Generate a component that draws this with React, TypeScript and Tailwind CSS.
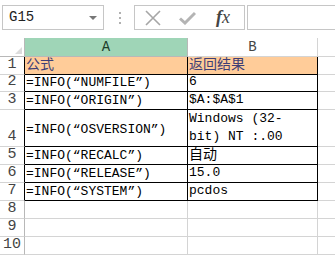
const cellFont = { fontFamily: '"Liberation Mono", "Noto Sans CJK SC", monospace' }

type Row = { n: number; h: string; a?: string; b?: string[]; head?: boolean; mid?: boolean; cjk?: boolean }

const rows: Row[] = [
  { n: 1, h: 'h-[18px]', a: '公式', b: ['返回结果'], head: true },
  { n: 2, h: 'h-[17px]', a: '=INFO(“NUMFILE”)', b: ['6'] },
  { n: 3, h: 'h-[18px]', a: '=INFO(“ORIGIN”)', b: ['$A:$A$1'] },
  { n: 4, h: 'h-[37px]', a: '=INFO(“OSVERSION”)', b: ['Windows (32-', 'bit) NT :.00'], mid: true },
  { n: 5, h: 'h-[18px]', a: '=INFO(“RECALC”)', b: ['自动'], cjk: true },
  { n: 6, h: 'h-[18px]', a: '=INFO(“RELEASE”)', b: ['15.0'] },
  { n: 7, h: 'h-[18px]', a: '=INFO(“SYSTEM”)', b: ['pcdos'] },
  { n: 8, h: 'h-[18px]' },
  { n: 9, h: 'h-[18px]' },
  { n: 10, h: 'h-[18px]' },
]

function FormulaBar() {
  return (
    <div className="flex h-[38px] items-start bg-white pt-[5px]">
      <div className="ml-[2px] flex h-[25px] w-[102px] items-center justify-between border border-[#c6c6c6] pl-[6px] pr-[6px]">
        <span className="text-[14px] text-[#222]" style={cellFont}>G15</span>
        <span className="mt-[1px] h-0 w-0 border-x-[4px] border-t-[4px] border-x-transparent border-t-[#777]" />
      </div>
      <div className="ml-[15px] mt-[7px] flex flex-col gap-[3px]">
        <span className="h-[2px] w-[2px] bg-[#b0b0b0]" />
        <span className="h-[2px] w-[2px] bg-[#b0b0b0]" />
        <span className="h-[2px] w-[2px] bg-[#b0b0b0]" />
      </div>
      <div className="ml-[13px] flex h-[25px] w-[111px] items-center border border-[#c6c6c6]">
        <svg width="16" height="16" viewBox="0 0 16 16" className="ml-[10px]">
          <path d="M1 1 L15 15 M15 1 L1 15" stroke="#a6a6a6" strokeWidth="1.6" />
        </svg>
        <svg width="17" height="14" viewBox="0 0 17 14" className="ml-[18px]">
          <path d="M1 7.5 L6 12 L16 2" stroke="#b4b4b4" strokeWidth="3" fill="none" />
        </svg>
        <span className="ml-[20px] text-[18px] italic text-[#444]" style={{ fontFamily: '"Liberation Serif", serif' }}>
          <span className="font-bold">f</span>x
        </span>
      </div>
      <div className="ml-[2px] h-[25px] flex-1 border border-r-0 border-[#c6c6c6]" />
    </div>
  )
}

export default function App() {
  return (
    <div className="h-[256px] w-[335px] overflow-hidden bg-white text-black">
      <FormulaBar />
      <div className="grid grid-cols-[25px_163px_130px_1fr]">
        <div className="relative h-[19px] border-r border-b border-[#b8b8b8] bg-white">
          <span className="absolute right-[2px] bottom-[2px] h-0 w-0 border-l-[7px] border-t-[7px] border-l-transparent border-t-transparent border-r-0 border-b-[7px] border-b-[#dcdcdc]" />
        </div>
        <div className="flex h-[19px] items-center justify-center border-r border-b border-[#b8b8b8] bg-[#9fd5b7] text-[14px] text-[#1d3d2a]" style={cellFont}>A</div>
        <div className="flex h-[19px] items-center justify-center border-r border-b border-[#d4d4d4] bg-white text-[14px] text-[#444]" style={cellFont}>B</div>
        <div className="h-[19px] border-b border-[#d4d4d4]" />
        {rows.map((r) => {
          const inTable = !!r.a
          const line = inTable ? 'border-black' : 'border-[#d4d4d4]'
          return [
            <div
              key={`n${r.n}`}
              className={`flex ${r.h} items-end justify-center border-b border-r border-b-[#d4d4d4] pb-[1px] text-[15px] leading-[16px] text-[#444] ${inTable ? 'border-r-black' : 'border-r-[#b8b8b8]'}`}
              style={cellFont}
            >
              {r.n}
            </div>,
            <div
              key={`a${r.n}`}
              className={`flex ${r.h} ${r.mid ? 'items-center pt-[3px]' : 'items-end'} border-r border-b ${line} pl-[1px] ${r.head ? 'bg-[#ffcc99] text-[14px] text-[#3f3f76]' : 'text-[13px]'} leading-[17px] whitespace-nowrap`}
              style={cellFont}
            >
              {r.a}
            </div>,
            <div
              key={`b${r.n}`}
              className={`flex ${r.h} flex-col justify-end border-r border-b ${line} pl-[1px] ${r.head ? 'bg-[#ffcc99] text-[14px] text-[#3f3f76]' : r.cjk ? 'text-[14px]' : 'text-[13px]'} leading-[18px] whitespace-nowrap`}
              style={cellFont}
            >
              {r.b?.map((t) => <span key={t}>{t}</span>)}
            </div>,
            <div key={`c${r.n}`} className={`${r.h} border-b border-[#d4d4d4]`} />,
          ]
        })}
      </div>
    </div>
  )
}
